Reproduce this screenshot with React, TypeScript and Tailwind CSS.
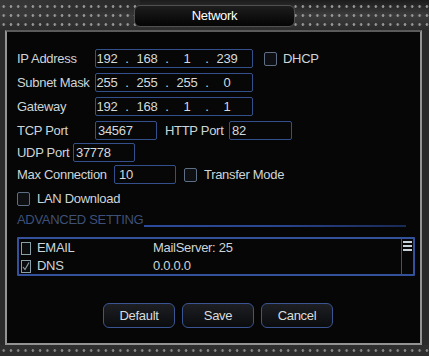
const font = { fontFamily: "'Liberation Sans', Arial, sans-serif" };

const Box = ({ className = "", children }: { className?: string; children?: React.ReactNode }) => (
  <div
    className={`h-[19px] border border-[#34508c] rounded-[2px] bg-[#070707] flex items-center text-[13px] text-[#d4dadc] ${className}`}
  >
    {children}
  </div>
);

const Check = () => (
  <div className="w-[13px] h-[14px] rounded-[2px] border border-[#5e6f85] bg-[#0d0f12] shrink-0" />
);

const IpBox = ({ parts }: { parts: string[] }) => (
  <Box className="w-[158px]">
    {parts.map((p, i) => (
      <div key={i} className="flex">
        {i > 0 && <span className="w-[18px] text-center">.</span>}
        <span className="w-[22px] text-center">{p}</span>
      </div>
    ))}
  </Box>
);

const Button = ({ label }: { label: string }) => (
  <div className="w-[72px] h-[25px] rounded-[6px] border-[1.5px] border-[#3a5591] bg-gradient-to-b from-[#1d1f23] to-[#0b0c0e] flex items-center justify-center text-[13px] text-[#d8dcde]">
    {label}
  </div>
);

export default function App() {
  return (
    <div
      className="w-[429px] h-[356px] bg-[#2a2a2a] flex flex-col overflow-hidden tracking-[-0.3px]"
      style={font}
    >
      {/* top frame */}
      <div className="h-[30px] relative bg-gradient-to-b from-[#1c1c1c] via-[#3c3c3c] to-[#2c2c2c]">
        <div className="absolute left-0 top-0 w-[140px] h-[30px] bg-gradient-to-br from-[#4a4a4a] via-[#2e2e2e] to-transparent opacity-60" />
        <div className="absolute left-0 right-0 top-[2px] h-[27px] bg-[radial-gradient(circle,#9a9a9a_1px,transparent_1.6px)] bg-[length:7.3px_9px]" />
        <div className="absolute left-[134px] top-[5px] w-[161px] h-[22px] rounded-[6px] border border-[#505050] bg-gradient-to-b from-[#1e1e1e] to-[#050505] flex items-center justify-center text-[13px] text-white">
          Network
        </div>
      </div>

      {/* panel */}
      <div className="ml-[5px] mr-[7px] h-[315px] border-2 border-[#939393] border-t-[#5a5a5a] bg-[#060606] pl-[10px] pt-[17px] text-[13px] text-[#cdd5d8]">
        <div className="flex items-center h-[19px]">
          <span className="w-[78px]">IP Address</span>
          <IpBox parts={["192", "168", "1", "239"]} />
          <div className="ml-[11px]"><Check /></div>
          <span className="ml-[6px]">DHCP</span>
        </div>
        <div className="flex items-center h-[19px] mt-[5px]">
          <span className="w-[78px]">Subnet Mask</span>
          <IpBox parts={["255", "255", "255", "0"]} />
        </div>
        <div className="flex items-center h-[19px] mt-[5px]">
          <span className="w-[78px]">Gateway</span>
          <IpBox parts={["192", "168", "1", "1"]} />
        </div>
        <div className="flex items-center h-[19px] mt-[5px]">
          <span className="w-[78px]">TCP Port</span>
          <Box className="w-[62px] pl-[2px]">34567</Box>
          <span className="w-[72px] pl-[8px]">HTTP Port</span>
          <Box className="w-[63px] pl-[2px]">82</Box>
        </div>
        <div className="flex items-center h-[19px] mt-[3px]">
          <span className="w-[56px]">UDP Port</span>
          <Box className="w-[62px] pl-[2px]">37778</Box>
        </div>
        <div className="flex items-center h-[19px] mt-[3px]">
          <span className="w-[97px]">Max Connection</span>
          <Box className="w-[62px] pl-[4px]">10</Box>
          <div className="ml-[8px]"><Check /></div>
          <span className="ml-[7px]">Transfer Mode</span>
        </div>
        <div className="flex items-center h-[19px] mt-[5px]">
          <Check />
          <span className="ml-[7px]">LAN Download</span>
        </div>
        <div className="flex items-end h-[15px] mt-[4px]">
          <span className="text-[#3e5078] leading-[15px]">ADVANCED SETTING</span>
          <div className="ml-[1px] w-[262px] h-[2px] bg-gradient-to-r from-[#2c4a9a] via-[#2a4590] to-[#1a2a55]" />
        </div>

        {/* list */}
        <div className="mt-[10px] w-[398px] h-[39px] border-2 border-[#34529b] rounded-[1px] flex">
          <div className="flex-1 flex flex-col pl-[2px]">
            <div className="h-[18px] flex items-center">
              <div className="w-[10px] h-[13px] border border-[#8aa0a8] bg-[#0a0c0e]" />
              <span className="ml-[6px] w-[116px]">EMAIL</span>
              <span>MailServer: 25</span>
            </div>
            <div className="h-[18px] flex items-center">
              <div className="w-[10px] h-[13px] border border-[#8aa0a8] bg-[#0a0c0e] flex items-center justify-center">
                <svg width="8" height="10" viewBox="0 0 8 10">
                  <path d="M1 6 L3 8.5 L7 1.5" stroke="#8d9ba2" strokeWidth="1.2" fill="none" />
                </svg>
              </div>
              <span className="ml-[6px] w-[116px]">DNS</span>
              <span>0.0.0.0</span>
            </div>
          </div>
          <div className="w-[12px] border-l border-[#34529b] flex flex-col items-center pt-[2px] gap-[2px]">
            <div className="w-[9px] h-[2px] bg-[#c8d0d8]" />
            <div className="w-[9px] h-[2px] bg-[#c8d0d8]" />
            <div className="w-[9px] h-[2px] bg-[#c8d0d8]" />
          </div>
        </div>

        <div className="mt-[27px] flex gap-[7px] pl-[86px]">
          <Button label="Default" />
          <Button label="Save" />
          <Button label="Cancel" />
        </div>
      </div>

      {/* bottom frame */}
      <div className="flex-1 relative bg-[#2e2e2e]">
        <div className="absolute left-0 right-0 top-[1px] h-[9px] bg-[radial-gradient(circle,#8a8a8a_1px,transparent_1.6px)] bg-[length:7.3px_9px]" />
      </div>
    </div>
  );
}
